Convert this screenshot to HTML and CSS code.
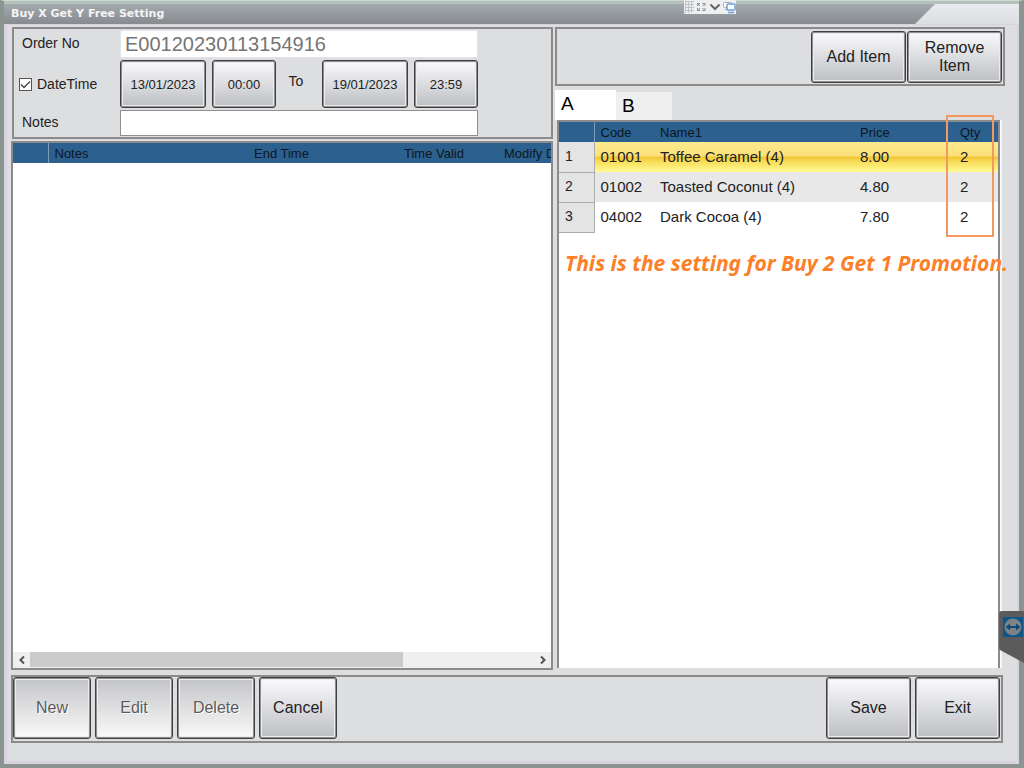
FILE: index.html
```
<!DOCTYPE html>
<html lang="en">
<head>
  <meta charset="UTF-8">
  <meta name="viewport" content="width=device-width, initial-scale=1.0">
  <title>Buy X Get Y Free Setting</title>
  <link rel="stylesheet" href="styles.css">
</head>
<body>

<div class="window">
  <div class="title-wrap">
    <h1 class="title-bar">Buy X Get Y Free Setting</h1>
  </div>

  <div class="content">
    <!-- Left side: order form and promotion list -->
    <div class="left">
      <form class="panel order-form">
        <label for="orderNo">Order No</label>
        <input type="text" id="orderNo" class="order-no" value="E00120230113154916" readonly>

        <label class="check-label"><input type="checkbox" checked>DateTime</label>
        <div class="dates">
          <button type="button" class="btn date">13/01/2023</button>
          <button type="button" class="btn time">00:00</button>
          <span class="to">To</span>
          <button type="button" class="btn date">19/01/2023</button>
          <button type="button" class="btn time">23:59</button>
        </div>

        <label for="notes">Notes</label>
        <input type="text" id="notes" class="notes">
      </form>

      <div class="list">
        <div class="list-body">
          <table class="grid promo-grid">
            <thead>
              <tr>
                <th class="col-mark"></th>
                <th class="col-notes">Notes</th>
                <th class="col-end">End Time</th>
                <th class="col-valid">Time Valid</th>
                <th class="col-modify">Modify Date</th>
              </tr>
            </thead>
          </table>
        </div>
        <div class="scrollbar">
          <button type="button" aria-label="Scroll left">
            <svg width="8" height="8" viewBox="0 0 8 8"><path d="M6 0.5L2.5 4L6 7.5" fill="none" stroke="#505050" stroke-width="2"/></svg>
          </button>
          <div class="track"><div class="thumb"></div></div>
          <button type="button" aria-label="Scroll right">
            <svg width="8" height="8" viewBox="0 0 8 8"><path d="M2 0.5L5.5 4L2 7.5" fill="none" stroke="#505050" stroke-width="2"/></svg>
          </button>
        </div>
      </div>
    </div>

    <!-- Right side: items of the promotion -->
    <div class="right">
      <div class="panel toolbar">
        <button type="button" class="btn tool">Add Item</button>
        <button type="button" class="btn tool">Remove<br>Item</button>
      </div>

      <div class="tabs">
        <button type="button" class="tab active">A</button>
        <button type="button" class="tab">B</button>
      </div>

      <div class="tab-page">
        <table class="grid item-grid">
          <thead>
            <tr>
              <th class="col-row"></th>
              <th class="col-code">Code</th>
              <th class="col-name">Name1</th>
              <th class="col-price">Price</th>
              <th class="col-qty">Qty</th>
            </tr>
          </thead>
          <tbody>
            <tr class="selected">
              <th>1</th><td>01001</td><td>Toffee Caramel (4)</td><td>8.00</td><td>2</td>
            </tr>
            <tr class="alt">
              <th>2</th><td>01002</td><td>Toasted Coconut (4)</td><td>4.80</td><td>2</td>
            </tr>
            <tr>
              <th>3</th><td>04002</td><td>Dark Cocoa (4)</td><td>7.80</td><td>2</td>
            </tr>
          </tbody>
        </table>
        <div class="qty-box"></div>
        <p class="callout">This is the setting for Buy 2 Get 1 Promotion.</p>
      </div>
    </div>
  </div>

  <!-- Action buttons -->
  <div class="panel actions">
    <button type="button" class="btn" disabled>New</button>
    <button type="button" class="btn" disabled>Edit</button>
    <button type="button" class="btn" disabled>Delete</button>
    <button type="button" class="btn">Cancel</button>
    <span class="spacer"></span>
    <button type="button" class="btn wide">Save</button>
    <button type="button" class="btn wide">Exit</button>
  </div>
</div>

<!-- Remote session widgets -->
<div class="remote-bar">
  <svg width="52" height="14" viewBox="0 0 52 14">
    <rect width="52" height="14" fill="#eeeff0"/>
    <path d="M1 1.5H10M1 4.5H10M1 7.5H10M1 10.5H10M1.5 1V13M4.5 1V13M7.5 1V13" stroke="#bfc1c4" fill="none"/>
    <path d="M13.5 6V3.5H16M13.5 3.5L16 6M21 6V3.5H18.5M21 3.5L18.5 6M13.5 8V10.5H16M13.5 10.5L16 8M21 8V10.5H18.5M21 10.5L18.5 8" stroke="#8f9193" fill="none"/>
    <path d="M26.5 4.5L31 9L35.5 4.5" stroke="#666" stroke-width="2" fill="none"/>
    <rect x="39.5" y="2.5" width="8" height="5" rx="1" fill="#fff" stroke="#a9adb2"/>
    <path d="M41 9.5H44" stroke="#a9adb2"/>
    <rect x="43" y="4" width="8" height="6" rx="1" fill="#fff" stroke="#6f9fd8" stroke-width="1.5"/>
    <path d="M44 12.5H50" stroke="#6f9fd8" stroke-width="1.5"/>
  </svg>
</div>
<div class="remote-tab">
  <svg width="25" height="52" viewBox="0 0 25 52">
    <path d="M3 0H25V52L1 39Q0 38 0 36V3Q0 0 3 0Z" fill="#5b5b5b"/>
    <rect x="4" y="6" width="20" height="20" fill="#0d568c"/>
    <circle cx="14" cy="16" r="8.5" fill="#7e8285"/>
    <path d="M6.5 16L11 12.5V15H17V12.5L21.5 16L17 19.5V17H11V19.5Z" fill="#0d4a7c"/>
  </svg>
</div>

</body>
</html>
```
FILE: styles.css
```
* {
  box-sizing: border-box;
}

body {
  margin: 0;
  font-family: "Liberation Sans", Arial, sans-serif;
  font-size: 14px;
  color: #222;
  background-color: #dddee0;
}

button, input {
  font-family: inherit;
}

/* Window frame */
.window {
  display: flex;
  flex-direction: column;
  height: 100vh;
  padding-bottom: 21px;
  border: 4px solid #8b958f;
  border-top: 1px solid #cdd8cf;
  border-right-width: 5px;
  box-shadow: inset 3px 0 #d9d2df, inset -2px 0 #d9d2df, inset 0 -3px #d9d2df;
}

.title-wrap {
  height: 24px;
  margin-bottom: 2px;
  padding-top: 3px;
  background: linear-gradient(#b4c1bd 3px, #e9eaef 3px, #dddee0);
  border-bottom: 1px solid #d9d0dc;
}

.title-bar {
  height: 20px;
  margin: 0 84px 0 0;
  padding-left: 7px;
  font-family: "DejaVu Sans", sans-serif;
  font-size: 11px;
  font-weight: bold;
  line-height: 20px;
  color: #f4f4f4;
  background: linear-gradient(#a3a9ac, #878b90);
  clip-path: polygon(0 0, 100% 0, calc(100% - 20px) 100%, 0 100%);
}

.content {
  display: flex;
  flex: 1;
  gap: 2px;
  min-height: 0;
  padding: 0 14px 0 7px;
}

.left {
  display: flex;
  flex: 542;
  flex-direction: column;
  gap: 2px;
  min-width: 0;
}

.right {
  display: flex;
  flex: 450;
  flex-direction: column;
  min-width: 0;
}

.panel {
  border: 2px solid #8b8b8b;
}

/* Buttons */
.btn {
  padding: 0;
  font-size: 16px;
  color: #222;
  background: linear-gradient(#fafafc, #dcdde0 50%, #bdbec2);
  border: 1px solid #3f3f42;
  border-radius: 3px;
  box-shadow: inset 0 0 0 1px #8f8f92, inset 0 0 0 2px #ececee;
}

.btn:disabled {
  color: #5c5c5c;
  text-shadow: 1px 1px #fff;
  background: linear-gradient(#c3c4c6, #fafafa);
}

/* Order form */
.order-form {
  display: grid;
  grid-template-columns: 98px 358px;
  grid-template-rows: 28px 48px 26px;
  row-gap: 2px;
  align-items: center;
  margin-left: 1px;
  padding: 1px 0 1px 8px;
}

.order-form > label {
  padding-bottom: 3px;
}

.order-no {
  width: 100%;
  height: 28px;
  padding: 0 4px;
  font-size: 20px;
  color: #757575;
  background-color: #fff;
  border: 1px solid #e4e4e6;
}

.notes {
  width: 100%;
  height: 26px;
  border: 1px solid #8f8f8f;
}

.order-form .check-label {
  display: flex;
  align-items: center;
  gap: 5px;
  margin-left: -3px;
  padding-bottom: 0;
}

.check-label input {
  appearance: none;
  width: 13px;
  height: 13px;
  margin: 0;
  background: #fff url("data:image/svg+xml,%3Csvg xmlns='http://www.w3.org/2000/svg' viewBox='0 0 11 11'%3E%3Cpath d='M1 5.5L4 8.5L10 2.5' fill='none' stroke='%23444' stroke-width='1.3'/%3E%3C/svg%3E");
  border: 1px solid #555;
}

.dates {
  display: flex;
  gap: 6px;
  height: 48px;
}

.dates .btn {
  font-size: 13px;
}

.dates .date {
  width: 86px;
}

.dates .time {
  width: 64px;
}

.dates .to {
  flex: 1;
  padding-top: 13px;
  padding-right: 6px;
  text-align: center;
}

/* Tables */
.grid {
  border-collapse: collapse;
  table-layout: fixed;
  width: 100%;
}

.grid th {
  font-weight: normal;
  text-align: left;
}

.grid thead th {
  height: 20px;
  padding: 0 0 0 6px;
  overflow: hidden;
  font-size: 13px;
  white-space: nowrap;
  color: #0c1722;
  background-color: #2b608f;
}

.grid thead th:first-child {
  border-right: 1px solid #7f9bb5;
}

/* Promotion list */
.list {
  display: flex;
  flex: 1;
  flex-direction: column;
  min-height: 0;
  background-color: #fff;
  border: 2px solid #8b8b8b;
}

.list-body {
  flex: 1;
  overflow: hidden;
}

.col-mark {
  width: 35px;
}

.col-notes {
  width: 200px;
}

.col-end {
  width: 150px;
}

.col-valid {
  width: 100px;
}

.scrollbar {
  display: flex;
  height: 16px;
  background-color: #efefef;
}

.scrollbar button {
  width: 17px;
  padding: 0;
  line-height: 8px;
  background: none;
  border: none;
}

.track {
  flex: 1;
}

.thumb {
  width: 74%;
  height: 15px;
  background-color: #cacaca;
}

/* Item side */
.toolbar {
  display: flex;
  justify-content: flex-end;
  gap: 1px;
  height: 59px;
  padding: 2px 1px 1px;
}

.tool {
  width: 95px;
  line-height: 18px;
}

.tabs {
  display: flex;
  align-items: flex-end;
  height: 34px;
}

.tab {
  width: 56px;
  height: 28px;
  padding: 0 6px;
  font-size: 19px;
  text-align: left;
  color: #000;
  background-color: #efefef;
  border: none;
}

.tab.active {
  width: 61px;
  height: 30px;
  padding: 0 6px 2px;
  background-color: #fff;
}

.tab-page {
  position: relative;
  flex: 1;
  margin: 0 5px 2px 2px;
  background-color: #fff;
  border: 2px solid #8b8b8b;
  border-bottom: none;
  box-shadow: 2px 0 #f7f7f7;
}

.item-grid {
  font-size: 15px;
}

.col-row {
  width: 35px;
}

.col-code {
  width: 60px;
}

.col-name {
  width: 200px;
}

.col-price {
  width: 100px;
}

.item-grid tbody th {
  font-size: 14px;
  background-color: #e4e4e5;
  border-right: 1px solid #ababab;
  border-bottom: 1px solid #ababab;
}

.item-grid tbody th,
.item-grid td {
  height: 30px;
  padding: 0 6px 2px;
}

.selected td {
  background: linear-gradient(#fdea8e, #fbe07a 45%, #f2c736 52%, #f9dc58 65%, #fffa94);
}

.alt td {
  background-color: #e8e8e8;
}

/* Notes drawn over the table */
.qty-box {
  position: absolute;
  top: -7px;
  right: 4px;
  width: 48px;
  height: 122px;
  border: 2px solid #f3985f;
}

.callout {
  position: absolute;
  top: 127px;
  left: 6px;
  margin: 0;
  font-family: "Noto Sans", "Open Sans", sans-serif;
  font-size: 21px;
  font-style: italic;
  font-weight: bold;
  line-height: 28px;
  white-space: nowrap;
  color: #fb8028;
}

/* Bottom bar */
.actions {
  display: flex;
  gap: 4px;
  height: 68px;
  margin: 5px 16px 0 7px;
  padding: 0 1px 2px 0;
}

.actions .btn {
  width: 78px;
}

.actions .wide {
  width: 85px;
}

.spacer {
  flex: 1;
}

/* Remote session widgets */
.remote-bar {
  position: fixed;
  top: 0;
  right: 288px;
  line-height: 0;
}

.remote-tab {
  position: fixed;
  right: 0;
  bottom: 105px;
  line-height: 0;
}
```
